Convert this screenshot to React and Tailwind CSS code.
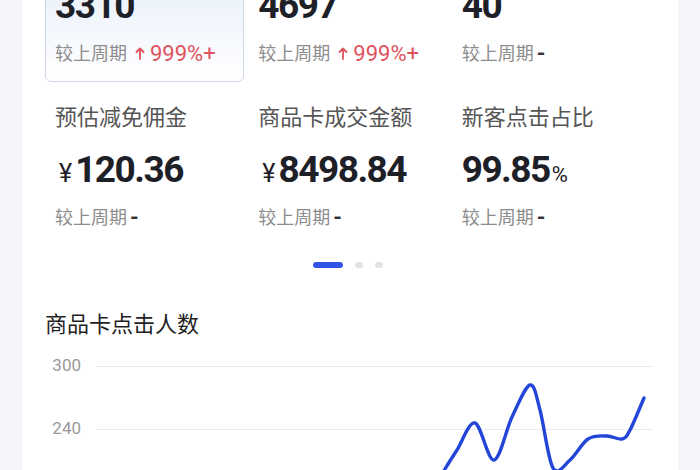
import React from "react";

const stats = [
  { label: "商品卡曝光人数", value: "3310", change: "999%+", active: true },
  { label: "商品卡点击次数", value: "4697", change: "999%+" },
  { label: "商品卡成交订单", value: "40" },
  { label: "预估减免佣金", value: "120.36", prefix: "¥" },
  { label: "商品卡成交金额", value: "8498.84", prefix: "¥" },
  { label: "新客点击占比", value: "99.85", suffix: "%" },
];

// chart points in svg space (x - 96, y - 356)
const points = [
  [318, 168],
  [334, 139],
  [349, 113],
  [361, 94],
  [379, 67],
  [398, 104],
  [416, 61],
  [434, 29],
  [444, 54],
  [457, 112],
  [474, 104],
  [492, 83],
  [511, 80],
  [526, 83],
  [534, 74],
  [548, 42],
];

// catmull-rom -> cubic bezier
const buildPath = (pts) => {
  let d = `M${pts[0][0]} ${pts[0][1]}`;
  for (let i = 0; i < pts.length - 1; i++) {
    const p0 = pts[i - 1] || pts[i];
    const p1 = pts[i];
    const p2 = pts[i + 1];
    const p3 = pts[i + 2] || p2;
    const c1x = p1[0] + (p2[0] - p0[0]) / 6;
    const c1y = p1[1] + (p2[1] - p0[1]) / 6;
    const c2x = p2[0] - (p3[0] - p1[0]) / 6;
    const c2y = p2[1] - (p3[1] - p1[1]) / 6;
    d += ` C${c1x} ${c1y} ${c2x} ${c2y} ${p2[0]} ${p2[1]}`;
  }
  return d;
};

const UpArrow = () => (
  <svg width="10" height="14" viewBox="0 0 10 14" className="ml-[8px] mr-[5px]">
    <path
      d="M5 13V2.5M1.5 6L5 2.5 8.5 6"
      fill="none"
      stroke="#e0525e"
      strokeWidth="1.8"
      strokeLinecap="round"
      strokeLinejoin="round"
    />
  </svg>
);

const StatCard = ({ item }) => (
  <div
    className={
      item.active
        ? "flex h-[160px] flex-col rounded-[6px] border border-[#cfd8e6] bg-gradient-to-b from-[#dde8f8] to-white pl-[9px] pt-[17px]"
        : "flex h-[160px] flex-col pl-[10px] pt-[18px]"
    }
  >
    <div className="text-[22px] leading-[28px] text-[#555]">{item.label}</div>
    <div className="mt-[10px] flex h-[44px] items-baseline text-[#1e2028]">
      {item.prefix && <span className="ml-[4px] mr-[3px] text-[25px]">{item.prefix}</span>}
      <span className="text-[37px] font-bold tracking-[-1.5px]">{item.value}</span>
      {item.suffix && <span className="ml-[2px] text-[22px]">{item.suffix}</span>}
    </div>
    <div className="mt-[19px] flex h-[24px] items-center">
      <span className="text-[18px] text-[#8c8c8c]">较上周期</span>
      {item.change ? (
        <>
          <UpArrow />
          <span className="text-[22px] text-[#e0525e]">{item.change}</span>
        </>
      ) : (
        <span className="ml-[3px] text-[22px] font-bold text-[#333]">-</span>
      )}
    </div>
  </div>
);

export default function App() {
  return (
    <div
      className="flex h-[470px] w-[700px] overflow-hidden bg-[#f6f5f9]"
      style={{ fontFamily: 'Roboto, "Noto Sans CJK SC", sans-serif' }}
    >
      <div className="w-[22px] shrink-0" />
      <main className="w-[656px] shrink-0 bg-white">
        <div className="ml-[23px] mt-[-78px] grid w-[606px] grid-cols-3 gap-[4px]">
          {stats.map((s) => (
            <StatCard key={s.label} item={s} />
          ))}
        </div>

        <div className="mt-[16px] flex h-[6px] items-center justify-center gap-[12px] pr-[4px]">
          <span className="h-[6px] w-[30px] rounded-full bg-[#3352e8]" />
          <span className="h-[6px] w-[8px] rounded-full bg-[#e2e2e2]" />
          <span className="h-[6px] w-[8px] rounded-full bg-[#e2e2e2]" />
        </div>

        <h2 className="ml-[23px] mt-[42px] text-[22px] leading-[30px] text-[#1f1f1f]">
          商品卡点击人数
        </h2>

        <div className="relative ml-[23px] mt-[16px] w-[608px]">
          {["300", "240", "180"].map((v) => (
            <div key={v} className="mb-[43px] flex h-[20px] items-center">
              <span className="w-[36px] text-right text-[17px] text-[#9a9a9a]">{v}</span>
              <span className="ml-[15px] h-px flex-1 bg-[#e9e9e9]" />
            </div>
          ))}
          <svg
            className="absolute left-[51px] top-0"
            width="557"
            height="180"
            viewBox="0 0 557 180"
          >
            <path
              d={buildPath(points)}
              fill="none"
              stroke="#2446d8"
              strokeWidth="3.4"
              strokeLinecap="round"
              strokeLinejoin="round"
            />
          </svg>
        </div>
      </main>
      <div className="flex-1" />
    </div>
  );
}
